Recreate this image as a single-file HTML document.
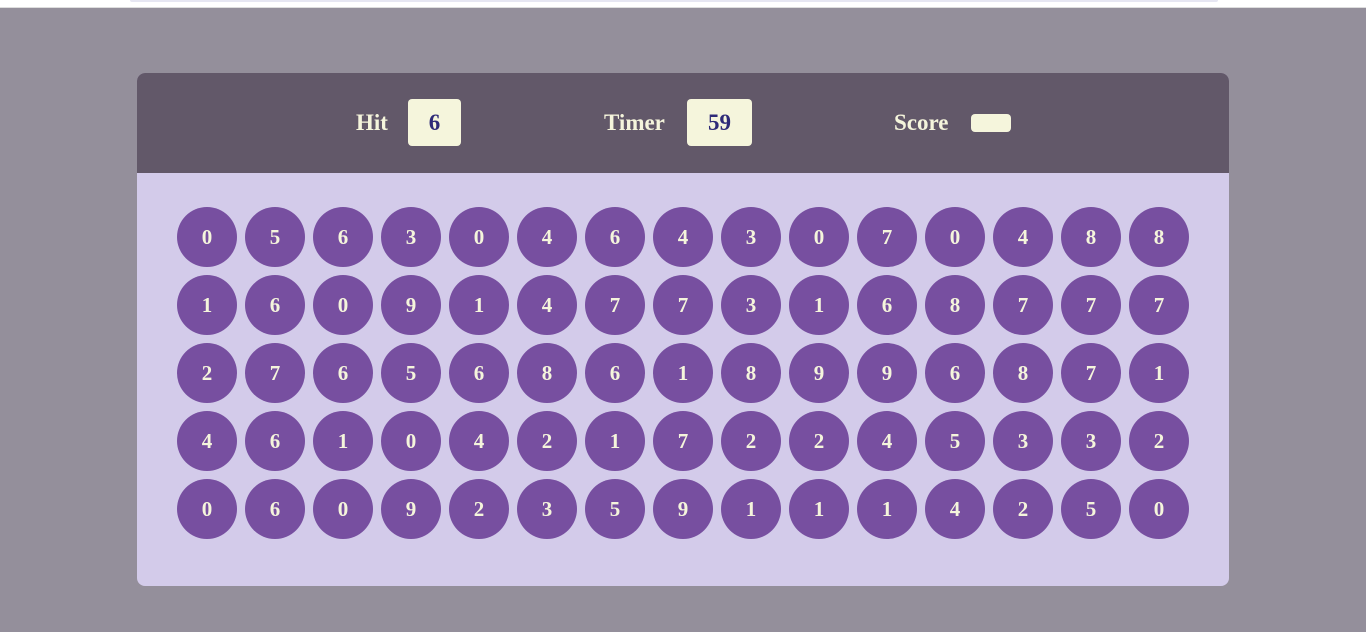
<!DOCTYPE html>
<html><head><style>
*{margin:0;padding:0;box-sizing:border-box}
body{width:1366px;height:632px;background:#948f9b;position:relative;overflow:hidden;font-family:"Liberation Serif",serif;font-weight:bold}
.top{position:absolute;left:0;top:0;width:1366px;height:8px;background:#fff;border-bottom:1px solid #ddd}
.top div{position:absolute;left:130px;top:0;width:1088px;height:2px;background:#e6e6f2;border-radius:0 0 3px 3px}
.panel{position:absolute;left:137px;top:73px;width:1092px;height:513px;background:#d3cbea;border-radius:8px;overflow:hidden}
.head{height:100px;background:#625869;position:relative;color:#f5f5dc;font-size:23px}
.lbl{position:absolute;top:37px}
.box{position:absolute;background:#f5f5dc;color:#2e2a78;border-radius:4px;text-align:center;font-size:23px;line-height:47px;top:26px;height:47px}
.grid{position:absolute;left:40px;top:134px;display:grid;grid-template-columns:repeat(15,60px);gap:8px}
.c{width:60px;height:60px;border-radius:50%;background:#774fa0;color:#f5f5dc;font-size:21px;text-align:center;line-height:60px}
</style></head><body>
<div class="top"><div></div></div>
<div class="panel">
<div class="head">
<span class="lbl" style="left:219px">Hit</span><div class="box" style="left:271px;width:53px">6</div>
<span class="lbl" style="left:467px">Timer</span><div class="box" style="left:550px;width:65px">59</div>
<span class="lbl" style="left:757px">Score</span><div class="box" style="left:834px;width:40px;top:41px;height:18px"></div>
</div>
<div class="grid">
<div class="c">0</div><div class="c">5</div><div class="c">6</div><div class="c">3</div><div class="c">0</div><div class="c">4</div><div class="c">6</div><div class="c">4</div><div class="c">3</div><div class="c">0</div><div class="c">7</div><div class="c">0</div><div class="c">4</div><div class="c">8</div><div class="c">8</div>
<div class="c">1</div><div class="c">6</div><div class="c">0</div><div class="c">9</div><div class="c">1</div><div class="c">4</div><div class="c">7</div><div class="c">7</div><div class="c">3</div><div class="c">1</div><div class="c">6</div><div class="c">8</div><div class="c">7</div><div class="c">7</div><div class="c">7</div>
<div class="c">2</div><div class="c">7</div><div class="c">6</div><div class="c">5</div><div class="c">6</div><div class="c">8</div><div class="c">6</div><div class="c">1</div><div class="c">8</div><div class="c">9</div><div class="c">9</div><div class="c">6</div><div class="c">8</div><div class="c">7</div><div class="c">1</div>
<div class="c">4</div><div class="c">6</div><div class="c">1</div><div class="c">0</div><div class="c">4</div><div class="c">2</div><div class="c">1</div><div class="c">7</div><div class="c">2</div><div class="c">2</div><div class="c">4</div><div class="c">5</div><div class="c">3</div><div class="c">3</div><div class="c">2</div>
<div class="c">0</div><div class="c">6</div><div class="c">0</div><div class="c">9</div><div class="c">2</div><div class="c">3</div><div class="c">5</div><div class="c">9</div><div class="c">1</div><div class="c">1</div><div class="c">1</div><div class="c">4</div><div class="c">2</div><div class="c">5</div><div class="c">0</div>
</div>
</div>
</body></html>
